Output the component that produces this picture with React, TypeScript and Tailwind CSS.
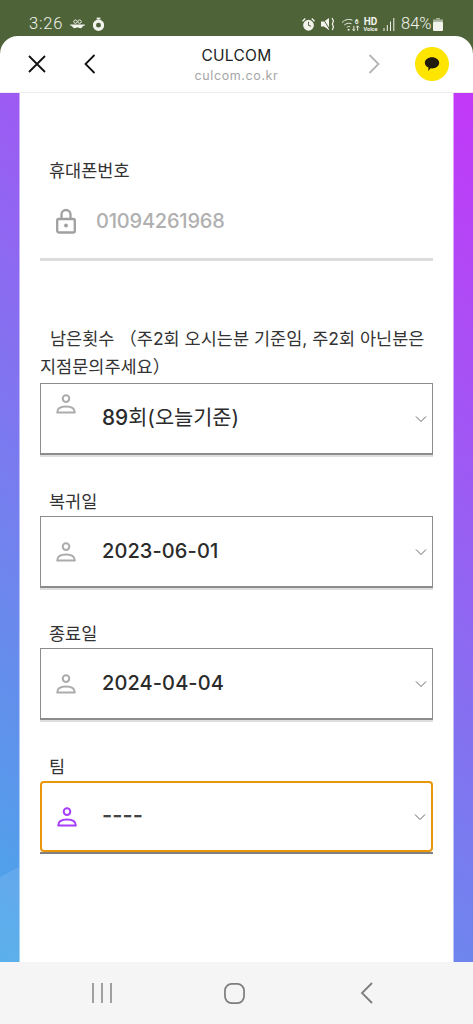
import React from 'react';

const sans = "font-['Inter','Noto_Sans_CJK_KR',sans-serif]";

const PersonIcon = ({ className }: { className: string }) => (
    <svg viewBox="0 0 20 20" className={className} fill="none" stroke="currentColor" strokeWidth="2">
        <circle cx="10" cy="4.6" r="3.3" />
        <path d="M1.2 18.6c0-4 3.6-6 8.800-6s8.800 2 8.800 6z" strokeLinejoin="round" />
    </svg>
);

const Chevron = () => (
    <svg viewBox="0 0 12 8" className="w-[12px] h-[8px] text-[#666]" fill="none" stroke="currentColor" strokeWidth="1">
        <path d="M1 1.500l5 5 5-5" />
    </svg>
);

interface SelectRowProps {
    label: string;
    value: string;
}

// the date rows share the same look
const SelectRow: React.FC<SelectRowProps> = ({ label, value }) => (
    <div>
        <div className="pl-[9px] h-[33px] text-[17.500px] leading-[24px] pt-[7px] text-[#333]">{label}</div>
        <div className="h-[72px] border-[1.5px] border-[#8c8c8c] border-b-[2px] shadow-[0_2px_0_#dedede] flex items-center pl-[15px] pr-[5px]">
            <PersonIcon className="w-[20px] h-[20px] text-[#ababab]" />
            <span className="ml-[26px] flex-1 text-[20px] font-medium tracking-[0.1px] text-[#2b2b2b] -mt-[1px]">{value}</span>
            <Chevron />
        </div>
    </div>
);

const StatusBar = () => (
    <div className="h-[36px] bg-[#4f6339] flex items-end justify-between pl-[29px] pr-[30px] pb-[3px] text-[#f1f3ec] font-['Roboto',sans-serif]">
        <div className="flex items-center">
            <span className="text-[16.500px] leading-[18px] font-light tracking-[0.8px]">3:26</span>
            <svg viewBox="0 0 16 10" className="ml-[7px] w-[15px] h-[10px]" fill="currentColor">
                <circle cx="5.800" cy="2.500" r="1.800" fill="none" stroke="currentColor" />
                <circle cx="10.200" cy="2.500" r="1.800" fill="none" stroke="currentColor" />
                <path d="M0 5.500h16c0 1-.7 1.300-1.500 1.300-1 0-1.500 2.700-3.500 2.700-1.500 0-2.200-1-3-1s-1.500 1-3 1c-2 0-2.500-2.700-3.500-2.700C.7 6.800 0 6.500 0 5.500z" />
            </svg>
            <svg viewBox="0 0 12 15" className="ml-[8px] w-[11px] h-[15px]" fill="currentColor">
                <rect x="4" y="0" width="4" height="2" />
                <path fillRule="evenodd" d="M6 2a6 6 0 1 1 0 12.500A6 6 0 0 1 6 2zm0 3.500a2.700 2.700 0 1 0 0 5.400 2.700 2.700 0 0 0 0-5.400z" />
            </svg>
        </div>
        <div className="flex items-center">
            <svg viewBox="0 0 14 14" className="w-[13px] h-[13px]" fill="currentColor">
                <path fillRule="evenodd" d="M7 2a5.800 5.800 0 1 1 0 11.600A5.800 5.800 0 0 1 7 2zM6.500 4v4l3 1.500.4-.9-2.400-1.200V4z" />
                <path d="M0 3l3-3 1 1-3 3zM14 3l-3-3-1 1 3 3z" />
            </svg>
            <svg viewBox="0 0 14 14" className="ml-[6px] w-[14px] h-[14px]" fill="currentColor">
                <path d="M0 4.500h3L8 1v12L3 9.500H0z" />
                <path d="M11 1l1.500 3-1.200 3 1.200 3-1.200 3" fill="none" stroke="currentColor" strokeWidth="1.200" />
                <path d="M1 0l8 13" stroke="#4f6339" strokeWidth="1" />
            </svg>
            <svg viewBox="0 0 20 15" className="ml-[6px] w-[19px] h-[15px]" fill="none" stroke="currentColor" strokeWidth="1">
                <path d="M1 5.500c3.500-3.500 7.500-4 11-2.500M3.500 8c2.500-2 5-2.300 7.500-1.300M6 10.500c1.300-1 2.500-1.100 3.700-.6" />
                <circle cx="8" cy="13" r="1" fill="currentColor" stroke="none" />
                <path d="M13.500 9v5M12 12.500l1.500 1.500 1.500-1.500M17.500 14V9M16 10.500L17.500 9l1.500 1.500" />
                <text x="14.500" y="6.500" fontSize="7" fill="currentColor" stroke="none" fontWeight="700">6</text>
            </svg>
            <div className="ml-[3px] w-[15px] flex flex-col items-center font-bold pt-[2px]">
                <span className="text-[10px] leading-[8px]">HD</span>
                <span className="text-[5.500px] leading-[6px]">Voice</span>
            </div>
            <svg viewBox="0 0 12 13" className="ml-[5px] w-[12px] h-[13px]" fill="currentColor">
                <rect x="0.500" y="10" width="1" height="3" />
                <rect x="3.800" y="7" width="1" height="6" />
                <rect x="7" y="3.500" width="1" height="9.500" />
                <rect x="10.300" y="0" width="1" height="13" />
            </svg>
            <span className="ml-[6px] w-[30px] text-[16.500px] leading-[18px] font-light">84%</span>
            <svg viewBox="0 0 10 13" className="ml-[2px] w-[10px] h-[13px]">
                <rect x="3" y="0" width="4" height="1.500" fill="#a9b39c" />
                <rect x="0" y="1.500" width="10" height="2" fill="#a9b39c" />
                <rect x="0" y="3.500" width="10" height="9.500" rx="1" fill="currentColor" />
            </svg>
        </div>
    </div>
);

const BrowserBar = () => (
    <div className="h-[57px] bg-white rounded-t-[18px] border-b border-[#ececec] flex items-center pl-[28px] pr-[24px]">
        <svg viewBox="0 0 18 18" className="w-[18px] h-[18px] text-[#111]" fill="none" stroke="currentColor" strokeWidth="1.800">
            <path d="M1 1l16 16M17 1L1 17" />
        </svg>
        <svg viewBox="0 0 12 20" className="ml-[38px] w-[12px] h-[20px] text-[#111]" fill="none" stroke="currentColor" strokeWidth="1.800">
            <path d="M10.500 1L1.500 10l9 9" />
        </svg>
        <div className={`flex-1 flex flex-col items-center pl-[9px] pt-[3px] ${sans}`}>
            <span className="text-[15.500px] leading-[20px] tracking-[0.3px] text-[#222]">CULCOM</span>
            <span className="text-[12.500px] leading-[18px] tracking-[0.6px] text-[#a6a6a6] mt-[1px]">culcom.co.kr</span>
        </div>
        <svg viewBox="0 0 12 20" className="w-[12px] h-[20px] text-[#b4b4b4]" fill="none" stroke="currentColor" strokeWidth="1.800">
            <path d="M1.500 1l9 9-9 9" />
        </svg>
        <div className="ml-[35px] w-[34px] h-[34px] rounded-full bg-[#fee500] flex items-center justify-center">
            <svg viewBox="0 0 16 16" className="w-[16px] h-[16px] text-[#201a0a]" fill="currentColor">
                <path d="M8 1.200c4 0 7.200 2.500 7.200 5.600S12 12.400 8 12.400c-.5 0-1 0-1.400-.1L4.200 15l.3-3.400C2.300 10.700.8 8.900.8 6.800.8 3.700 4 1.200 8 1.200z" />
            </svg>
        </div>
    </div>
);

const NavBar = () => (
    <div className="h-[62px] bg-[#f5f5f5] flex items-center pl-[92px] text-[#7d7d7d]">
        <svg viewBox="0 0 20 20" className="w-[20px] h-[20px]" fill="none" stroke="currentColor" strokeWidth="1.400">
            <path d="M1 0v20M10 0v20M19 0v20" />
        </svg>
        <svg viewBox="0 0 22 22" className="ml-[112px] w-[21px] h-[21px]" fill="none" stroke="currentColor" strokeWidth="1.800">
            <rect x="1" y="1" width="20" height="20" rx="7" />
        </svg>
        <svg viewBox="0 0 13 22" className="ml-[115px] w-[13px] h-[22px]" fill="none" stroke="currentColor" strokeWidth="1.800">
            <path d="M12 1L2 11l10 10" />
        </svg>
    </div>
);

export default function App() {
    return (
        <div className={`w-[473px] h-[1024px] overflow-hidden bg-[#4f6339] flex flex-col ${sans}`}>
            <StatusBar />
            <BrowserBar />
            <main className="relative h-[869px] bg-[linear-gradient(40deg,#48a8e9,#c338f8)] px-[19px]">
                {/* lighter wave in the wallpaper, bottom left */}
                <svg viewBox="0 0 19 95" className="absolute left-0 bottom-0 w-[19px] h-[95px] text-white/10" fill="currentColor">
                    <path d="M0 10L19 0v95H0z" />
                </svg>
                <div className="relative h-full bg-white border-x border-white/50 bg-clip-padding px-[20px] pt-[66px] text-[#333]">
                    <div className="pl-[9px] text-[17.500px] leading-[24px]">휴대폰번호</div>
                    <div className="h-[71px] mt-[7px] border-b-[3px] border-[#dcdcdc] flex items-start pl-[16px] pt-[18px]">
                        <svg viewBox="0 0 20 26" className="w-[20px] h-[26px] text-[#a0a0a0]" fill="none" stroke="currentColor" strokeWidth="2.300">
                            <path d="M5.500 11V6.500a4.500 4.500 0 0 1 9 0V11" />
                            <rect x="1.200" y="11" width="17.600" height="13.500" rx="1.500" />
                            <circle cx="10" cy="17.500" r="1.900" fill="currentColor" stroke="none" />
                        </svg>
                        <span className="ml-[20px] text-[20px] leading-[26px] text-[#b0b0b0] font-medium tracking-[-0.2px]">01094261968</span>
                    </div>
                    <div className="mt-[54px] text-[17.500px] leading-[28px] h-[69px] pt-[10px]">
                        <span className="pl-[10px]">남은횟수 （주2회 오시는분 기준임, 주2회 아닌분은</span>
                        <br />
                        지점문의주세요）
                    </div>
                    <div className="h-[72px] -mt-[1px] border-[1.500px] border-[#8c8c8c] border-b-[2px] shadow-[0_2px_0_#dedede] flex items-center pl-[15px] pr-[5px]">
                        <PersonIcon className="w-[20px] h-[20px] text-[#ababab] -mt-[30px]" />
                        <span className="ml-[26px] flex-1 text-[20.800px] text-[#2b2b2b] -mt-[2px]"><span className="font-medium">89</span>회(오늘기준)</span>
                        <Chevron />
                    </div>
                    <div className="mt-[28px] flex flex-col gap-[27px]">
                        <SelectRow label="복귀일" value="2023-06-01" />
                        <SelectRow label="종료일" value="2024-04-04" />
                    </div>
                    <div className="mt-[28px]">
                        <div className="pl-[9px] h-[33px] text-[17.500px] leading-[24px] pt-[7px]">팀</div>
                        <div className="h-[73px] border-b-[2px] border-[#808080]">
                            <div className="h-[71px] border-[2px] border-[#e8960c] rounded-[4px] flex items-center pl-[15px] pr-[5px]">
                                <PersonIcon className="w-[20px] h-[20px] text-[#a53dfa]" />
                                <span className="ml-[25px] flex-1 text-[22px] font-semibold text-[#444] -mt-[3px]">----</span>
                                <Chevron />
                            </div>
                        </div>
                    </div>
                </div>
            </main>
            <NavBar />
        </div>
    );
}
